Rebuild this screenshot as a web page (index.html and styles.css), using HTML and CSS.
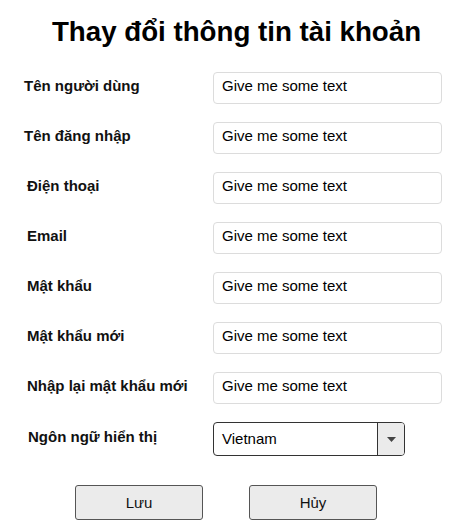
FILE: index.html
```html
<!DOCTYPE html>
<html lang="vi">
<head>
<meta charset="utf-8">
<title>Thay đổi thông tin tài khoản</title>
<link rel="stylesheet" href="styles.css">
</head>
<body>
<div class="page">
  <h1 class="title">Thay đổi thông tin tài khoản</h1>
  <div class="form">
    <div class="row"><label class="label">Tên người dùng</label><div class="field">Give me some text</div></div>
    <div class="row"><label class="label">Tên đăng nhập</label><div class="field">Give me some text</div></div>
    <div class="row"><label class="label label-in">Điện thoại</label><div class="field">Give me some text</div></div>
    <div class="row"><label class="label label-in">Email</label><div class="field">Give me some text</div></div>
    <div class="row"><label class="label label-in">Mật khẩu</label><div class="field">Give me some text</div></div>
    <div class="row"><label class="label label-in">Mật khẩu mới</label><div class="field">Give me some text</div></div>
    <div class="row"><label class="label label-in">Nhập lại mật khẩu mới</label><div class="field">Give me some text</div></div>
    <div class="row row-select"><label class="label label-in">Ngôn ngữ hiển thị</label>
      <div class="select"><span class="select-value">Vietnam</span><span class="select-btn"><svg width="9" height="5" viewBox="0 0 9 5"><path d="M0 0H9L4.5 5Z" fill="#444"/></svg></span></div>
    </div>
  </div>
  <div class="actions">
    <button class="btn">Lưu</button>
    <button class="btn">Hủy</button>
  </div>
</div>
</body>
</html>
```
FILE: styles.css
```css
html, body {
  margin: 0;
  padding: 0;
  background: #fff;
}
body {
  font-family: "Liberation Sans", Arial, sans-serif;
  color: #000;
}
.page {
  width: 473px;
  padding-top: 14px;
}
.title {
  margin: 0;
  font-size: 27.7px;
  font-weight: bold;
  text-align: center;
  line-height: 36px;
}
.form {
  margin-top: 22px;
  display: flex;
  flex-direction: column;
  gap: 18px;
}
.row {
  display: flex;
  align-items: flex-start;
  height: 32px;
}
.label {
  flex: 0 0 213px;
  padding-left: 24px;
  box-sizing: border-box;
  font-size: 15px;
  font-weight: bold;
  line-height: 16px;
  padding-top: 6px;
  color: #111;
}
.label-in {
  padding-left: 27px;
}
.field {
  width: 229px;
  height: 32px;
  box-sizing: border-box;
  border: 1px solid #dcdcdc;
  border-radius: 4px;
  padding: 5px 8px 0;
  font-size: 15px;
  line-height: 16px;
  color: #000;
}
.row-select {
  height: 34px;
}
.row-select .label {
  padding-left: 28px;
  padding-top: 7px;
}
.select {
  width: 192px;
  height: 34px;
  box-sizing: border-box;
  border: 1px solid #333;
  border-radius: 4px;
  display: flex;
  overflow: hidden;
}
.select-value {
  flex: 1;
  padding: 8px 8px 0;
  font-size: 15px;
  line-height: 16px;
}
.select-btn {
  width: 26px;
  border-left: 1px solid #333;
  background: #ebebeb;
  display: flex;
  align-items: center;
  justify-content: center;
}
.actions {
  margin-top: 29px;
  display: flex;
  gap: 46px;
  padding-left: 75px;
}
.btn {
  width: 128px;
  height: 35px;
  box-sizing: border-box;
  border: 1px solid #555;
  border-radius: 3px;
  background: #ebebeb;
  font-family: "Liberation Sans", Arial, sans-serif;
  font-size: 15px;
  color: #111;
  padding: 0;
}
```
